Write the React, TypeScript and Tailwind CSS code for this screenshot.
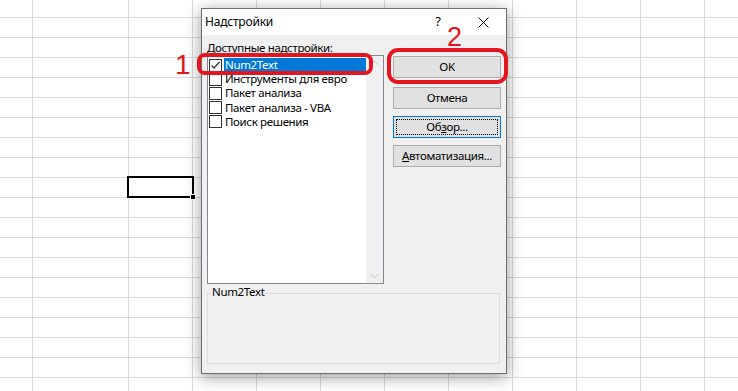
import React from 'react';

interface AddIn {
  name: string;
  checked: boolean;
  selected?: boolean;
}

const addins: AddIn[] = [
  { name: 'Num2Text', checked: true, selected: true },
  { name: 'Инструменты для евро', checked: false },
  { name: 'Пакет анализа', checked: false },
  { name: 'Пакет анализа - VBA', checked: false },
  { name: 'Поиск решения', checked: false },
];

const Checkbox: React.FC<{ checked: boolean }> = ({ checked }) => (
  <span className="w-[13px] h-[13px] shrink-0 border border-[#333333] bg-white flex items-center justify-center">
    {checked && (
      <svg width="11" height="11" viewBox="0 0 11 11">
        <path d="M1.5 5.5 L4 8 L9.5 2" fill="none" stroke="#333333" strokeWidth="1.3" />
      </svg>
    )}
  </span>
);

const DialogButton: React.FC<{ children: React.ReactNode; focused?: boolean; className?: string }> = ({
  children,
  focused = false,
  className = '',
}) => (
  <div
    className={`h-[22px] w-[108px] flex items-center justify-center bg-[#e1e1e1] border ${
      focused ? 'border-[#0078d7] p-[2px]' : 'border-[#adadad]'
    } ${className}`}
  >
    {focused ? (
      <span className="w-full h-full flex items-center justify-center border border-dotted border-black">
        {children}
      </span>
    ) : (
      children
    )}
  </div>
);

export default function App() {
  const cells = Array.from({ length: 12 * 20 });

  return (
    <div className="relative w-[738px] h-[391px] overflow-hidden bg-white font-['Noto_Sans',sans-serif] text-[11.5px] tracking-[-0.35px] text-black">
      {/* Лист Excel */}
      <div className="grid grid-cols-[33px_96px_repeat(10,64px)] grid-rows-[18px_repeat(19,20px)]">
        {cells.map((_, i) => (
          <div key={i} className="border-r border-b border-[#dadada]" />
        ))}
      </div>

      {/* Активная ячейка */}
      <div className="absolute left-[127px] top-[176px] w-[67px] h-[22px] border-2 border-black" />
      <div className="absolute left-[190px] top-[194px] w-[6px] h-[6px] bg-black border border-white" />

      {/* Диалог */}
      <div className="absolute left-[201px] top-[8px] w-[306px] h-[366px] flex flex-col border border-[#6f6f6f] bg-[#f0f0f0] shadow-[0_3px_15px_rgba(0,0,0,0.4)]">
        <div className="h-[26px] bg-white flex items-center">
          <span className="pl-[3px] text-[12px] tracking-[-0.2px]">Надстройки</span>
          <div className="ml-auto flex h-full">
            <span className="w-[46px] h-full flex items-center justify-center text-[13px]">?</span>
            <span className="w-[45px] h-full flex items-center justify-center">
              <svg width="11" height="11" viewBox="0 0 11 11">
                <path d="M0.5 0.5 L10.5 10.5 M10.5 0.5 L0.5 10.5" stroke="#111" strokeWidth="1" />
              </svg>
            </span>
          </div>
        </div>

        <div className="flex-1 flex flex-col pl-[5px] pr-[5px]">
          <div className="flex">
            <div className="w-[177px] flex flex-col">
              <div className="mt-[6px] h-[14px] leading-[14px]">
                <span className="underline underline-offset-1">Д</span>оступные надстройки:
              </div>
              <div className="h-[229px] border border-[#828790] bg-white flex">
                <div className="flex-1 pt-[2px] pl-[1px]">
                  {addins.map((a) => (
                    <div key={a.name} className="h-[14.2px] flex items-center">
                      <Checkbox checked={a.checked} />
                      <span
                        className={`ml-[2px] h-[14px] flex-1 pl-[1px] leading-[14px] ${
                          a.selected ? 'bg-[#0078d7] text-white' : ''
                        }`}
                      >
                        {a.name}
                      </span>
                    </div>
                  ))}
                </div>
                <div className="w-[17px] bg-[#f0f0f0] flex flex-col justify-between items-center py-[4px]">
                  <svg width="9" height="6" viewBox="0 0 9 6">
                    <path d="M0.5 5 L4.5 1 L8.5 5" fill="none" stroke="#c2c2c2" strokeWidth="1" />
                  </svg>
                  <svg width="9" height="6" viewBox="0 0 9 6">
                    <path d="M0.5 1 L4.5 5 L8.5 1" fill="none" stroke="#c2c2c2" strokeWidth="1" />
                  </svg>
                </div>
              </div>
            </div>

            <div className="ml-auto mt-[21px] flex flex-col">
              <DialogButton>OK</DialogButton>
              <DialogButton className="mt-[9px]">Отмена</DialogButton>
              <DialogButton className="mt-[7px]" focused>
                <span>
                  Об<span className="underline underline-offset-1">з</span>ор...
                </span>
              </DialogButton>
              <DialogButton className="mt-[7px]">
                <span>
                  <span className="underline underline-offset-1">А</span>втоматизация...
                </span>
              </DialogButton>
            </div>
          </div>

          <div className="relative mt-[9px] w-[293px] h-[71px] border border-[#dcdcdc]">
            <span className="absolute left-[3px] -top-[9px] px-px bg-[#f0f0f0] leading-[14px]">Num2Text</span>
          </div>
        </div>
      </div>

      {/* Пометки */}
      <div className="absolute left-[197px] top-[53px] w-[176px] h-[22px] border-4 border-[#e3161f] rounded-[8px]" />
      <div className="absolute left-[387px] top-[48px] w-[121px] h-[36px] border-4 border-[#e3161f] rounded-[11px]" />
      <span className="absolute left-[175px] top-[51px] text-[28px] leading-none tracking-normal text-[#e3161f] font-['Liberation_Sans',sans-serif]">
        1
      </span>
      <span className="absolute left-[447px] top-[24px] text-[27px] leading-none tracking-normal text-[#e3161f] font-['Liberation_Sans',sans-serif]">
        2
      </span>
    </div>
  );
}
